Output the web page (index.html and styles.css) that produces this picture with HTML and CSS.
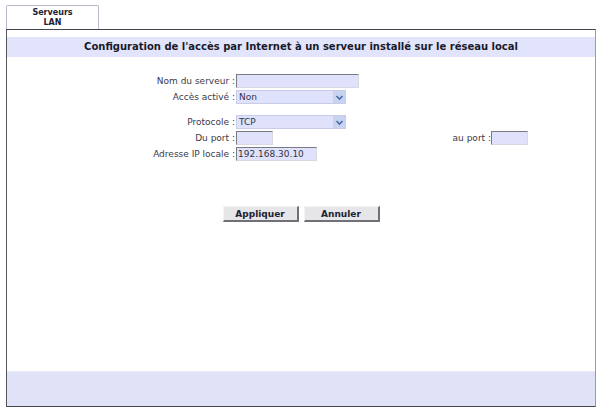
FILE: index.html
```html
<!DOCTYPE html>
<html lang="fr">
<head>
<meta charset="utf-8">
<title>Serveurs LAN</title>
<link rel="stylesheet" href="styles.css">
</head>
<body>
<div class="tabs">
  <div class="tab">Serveurs<br>LAN</div>
</div>
<div class="panel">
  <div class="title">Configuration de l'accès par Internet à un serveur installé sur le réseau local</div>
  <div class="form">
    <div class="row">
      <span class="label">Nom du serveur :</span>
      <span class="field"><span class="input w-name"></span></span>
    </div>
    <div class="row">
      <span class="label">Accès activé :</span>
      <span class="field"><span class="select"><span class="val">Non</span><span class="arrow"><svg width="11" height="11" viewBox="0 0 11 11"><path d="M2.5 4 L5.5 7 L8.5 4" fill="none" stroke="#4a6aa8" stroke-width="1.6"/></svg></span></span></span>
    </div>
    <div class="row gap">
      <span class="label">Protocole :</span>
      <span class="field"><span class="select"><span class="val">TCP</span><span class="arrow"><svg width="11" height="11" viewBox="0 0 11 11"><path d="M2.5 4 L5.5 7 L8.5 4" fill="none" stroke="#4a6aa8" stroke-width="1.6"/></svg></span></span></span>
    </div>
    <div class="row">
      <span class="label">Du port :</span>
      <span class="field"><span class="input w-port"></span></span>
      <span class="label2">au port :</span>
      <span class="input w-port2"></span>
    </div>
    <div class="row">
      <span class="label">Adresse IP locale :</span>
      <span class="field"><span class="input w-ip">192.168.30.10</span></span>
    </div>
  </div>
  <div class="buttons">
    <button class="btn">Appliquer</button>
    <button class="btn">Annuler</button>
  </div>
  <div class="spacer"></div>
  <div class="footer"></div>
</div>
</body>
</html>
```
FILE: styles.css
```css
html, body {
  margin: 0;
  padding: 0;
  background: #ffffff;
  font-family: "DejaVu Sans", Verdana, sans-serif;
  font-size: 9px;
  color: #3a3a48;
}
.tabs {
  display: flex;
  padding: 5px 0 0 6px;
}
.tab {
  width: 93px;
  height: 24px;
  box-sizing: border-box;
  border: 1px solid #b8bcc8;
  border-bottom: none;
  border-radius: 2px 2px 0 0;
  background: #ffffff;
  font-weight: bold;
  font-size: 8px;
  line-height: 10px;
  text-align: center;
  padding-top: 2px;
  color: #222233;
}
.panel {
  margin: 0 2px 0 6px;
  height: 378px;
  box-sizing: border-box;
  border-top: 1px solid #444450;
  border-left: 1px solid #555560;
  border-right: 1px solid #9a9aa4;
  border-bottom: 1px solid #444450;
  display: flex;
  flex-direction: column;
}
.title {
  margin-top: 7px;
  height: 20px;
  background: #e1e4fa;
  font-weight: bold;
  font-size: 10px;
  line-height: 20px;
  text-align: center;
  color: #1a1a2a;
}
.form {
  margin-top: 17px;
  display: flex;
  flex-direction: column;
  gap: 2px;
}
.row {
  display: flex;
  align-items: center;
  height: 14px;
}
.row.gap {
  margin-top: 9px;
}
.label {
  width: 228px;
  text-align: right;
  flex: none;
  white-space: nowrap;
}
.field {
  flex: 1;
  display: flex;
  padding-left: 1px;
}
.label2 {
  white-space: nowrap;
  text-align: right;
}
.input {
  display: inline-block;
  height: 14px;
  box-sizing: border-box;
  background: #dfe2fa;
  border-top: 1px solid #7a7a84;
  border-left: 1px solid #7a7a84;
  border-right: 1px solid #d8d8e0;
  border-bottom: 1px solid #d8d8e0;
  font-size: 9px;
  line-height: 12px;
  padding-left: 1px;
  color: #333344;
}
.w-name { width: 123px; }
.w-port { width: 37px; }
.w-ip { width: 81px; }
.w-port2 { width: 37px; margin-right: 67px; flex: none; }
.select {
  display: flex;
  align-items: center;
  width: 110px;
  height: 14px;
  box-sizing: border-box;
  background: #dfe2fa;
  border: 1px solid #c8cce8;
  padding-left: 2px;
  font-size: 9px;
  color: #333344;
}
.select .val {
  flex: 1;
}
.select .arrow {
  width: 12px;
  height: 12px;
  background: #c7d3f0;
  display: flex;
  align-items: center;
  justify-content: center;
}
.buttons {
  margin-top: 45px;
  display: flex;
  justify-content: center;
  gap: 5px;
}
.btn {
  width: 76px;
  height: 16px;
  padding: 0;
  margin: 0;
  background: #e6e6e8;
  border-top: 1px solid #f4f4f4;
  border-left: 1px solid #f4f4f4;
  border-right: 2px solid #707078;
  border-bottom: 2px solid #707078;
  font-family: "DejaVu Sans", Verdana, sans-serif;
  font-weight: bold;
  font-size: 9px;
  color: #222233;
}
.spacer {
  flex: 1;
}
.footer {
  height: 34px;
  background: #e0e3f8;
  border-top: 1px solid #e8eaf6;
}
```
